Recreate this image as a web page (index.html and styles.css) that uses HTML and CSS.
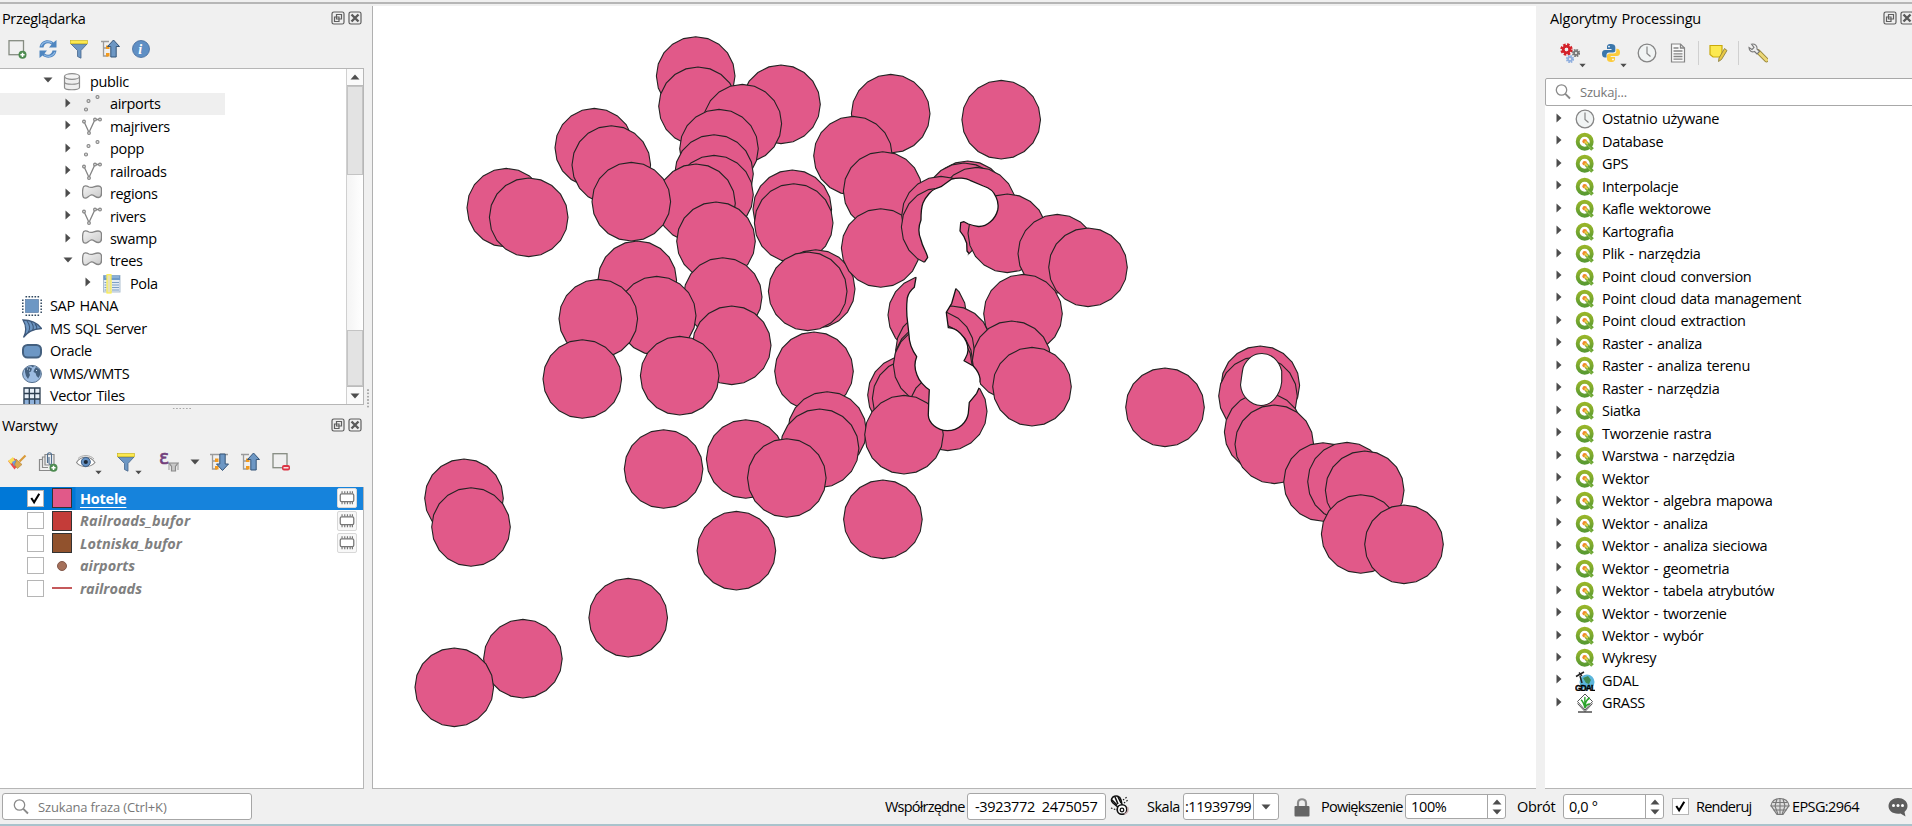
FILE: index.html
```html
<!DOCTYPE html>
<html lang="pl">
<head>
<meta charset="utf-8">
<title>QGIS</title>
<link rel="stylesheet" href="styles.css">
</head>
<body>
<svg class="defs" width="0" height="0">
  <defs>
    <linearGradient id="gPoly" x1="0" y1="0" x2="1" y2="1"><stop offset="0" stop-color="#f4f4f4"/><stop offset="1" stop-color="#c9c9c9"/></linearGradient>
    <linearGradient id="gQ" x1="0" y1="0" x2="0" y2="1"><stop offset="0" stop-color="#97b52a"/><stop offset="1" stop-color="#5a9a32"/></linearGradient>
    <symbol id="right" viewBox="0 0 6 10"><path d="M0.5 0.5L5.5 5L0.5 9.5Z" fill="#4d4d4d"/></symbol>
    <symbol id="down" viewBox="0 0 10 6"><path d="M0.5 0.5H9.5L5 5.5Z" fill="#4d4d4d"/></symbol>
    <symbol id="up" viewBox="0 0 10 6"><path d="M0.5 5.5H9.5L5 0.5Z" fill="#4d4d4d"/></symbol>
    <symbol id="db" viewBox="0 0 20 20"><path d="M2.5 4.5v11c0 3 15 3 15 0v-11" fill="#eee" stroke="#8c8c8c" stroke-width="1.2"/><ellipse cx="10" cy="4.5" rx="7.5" ry="2.8" fill="#f4f4f4" stroke="#8c8c8c" stroke-width="1.2"/><path d="M2.5 10c0 3 15 3 15 0" fill="none" stroke="#8c8c8c" stroke-width="1.2"/></symbol>
    <symbol id="points" viewBox="0 0 20 20"><g fill="#ddd" stroke="#858585" stroke-width="1.1"><circle cx="6.5" cy="7" r="1.5"/><circle cx="15.5" cy="3" r="1.5"/><circle cx="4" cy="15.5" r="1.5"/></g></symbol>
    <symbol id="lines" viewBox="0 0 20 20"><path d="M2 4.500L7 15.500L13 2.500H18" fill="none" stroke="#858585" stroke-width="1.3"/><g fill="#ddd" stroke="#858585" stroke-width="1.100"><circle cx="2" cy="4.500" r="1.400"/><circle cx="7" cy="16" r="1.400"/><circle cx="13" cy="2.500" r="1.400"/><circle cx="18" cy="2.500" r="1.400"/></g></symbol>
    <symbol id="area" viewBox="0 0 20 20"><path d="M1 4C1.500 1 4.500 1.500 7 3C10 4.500 12 2 16 2C20 2 19.500 5 19.500 8C19.500 11 19.500 13.500 16.500 13.500C13 13.500 12 10.500 9 11C6 12 4.500 16 1.500 13.500C0 11 .5 7 1 4Z" fill="url(#gPoly)" stroke="#858585" stroke-width="1.3"/></symbol>
    <symbol id="fields" viewBox="0 0 20 20"><rect x="1.500" y="1.500" width="16.500" height="16.500" fill="#e3ebf3" stroke="#aebfd0"/><rect x="1.500" y="1.500" width="16.500" height="4.500" fill="#6f9bc8"/><path d="M3 3h14" stroke="#a9c6e4"/><path d="M10 8.500h7M10 11h7M10 13.500h7M10 16h7M2.500 8.500h2M2.500 11h2M2.500 13.500h2M2.500 16h2" stroke="#7d9fc4"/><rect x="5" y="0.700" width="4" height="18.300" fill="#e6e2bb" stroke="#fcee4e" stroke-width="1.200"/></symbol>
    <symbol id="hana" viewBox="0 0 20 20"><rect x="3.500" y="3.500" width="13" height="13" fill="#6d97c4" stroke="#4b6f9b" stroke-width=".6"/><g stroke="#31485f" stroke-width="1.500" stroke-dasharray="1.600 1.400" fill="none"><path d="M3.500 .8h14M3.500 19.200h14M.8 3.500v14M19.200 3.500v14"/></g></symbol>
    <symbol id="mssql" viewBox="0 0 20 20"><path d="M1 1C8 1 16 4 19.500 9.500C12 10 5 13 1.500 18.500C5 12 4 6 1 1Z" fill="#6d97c4" stroke="#3d587a" stroke-width="1.300"/><path d="M5 2C8 6 8.500 10 6 13.500M9 3C11.500 6 12 9 10.500 11.500M13 5C15 7 15 8.500 14.500 10" fill="none" stroke="#3d587a" stroke-width="1.100"/></symbol>
    <symbol id="oracle" viewBox="0 0 20 20"><rect x="1" y="4" width="18" height="12.500" rx="4.500" fill="#6d97c4" stroke="#44607f" stroke-width="2"/></symbol>
    <symbol id="wms" viewBox="0 0 20 20"><ellipse cx="10" cy="10" rx="9.400" ry="8.600" fill="#9cbbe0" stroke="#55708f"/><path d="M3 4.500l4-1.500 3 1.500-1 3-2 1 1 2.500-2 4-2-3-1-4zM12 6l2-3 4 3 .500 4-2 4-2-2-1-3-2-1zM9 2h3l-1 1.500z" fill="#45617f"/><path d="M5 5h1M14 6l1 1M8 6l-1 0" stroke="#cfe0f2"/></symbol>
    <symbol id="grid" viewBox="0 0 20 20"><rect x="1.500" y="1.500" width="16" height="18" fill="#e6eef7"/><rect x="1.500" y="13" width="16" height="6" fill="#8fb1da"/><path d="M2 2H18V20H2ZM7.300 2V20M12.700 2V20M2 7.500H18M2 13H18" fill="none" stroke="#2c3e50" stroke-width="1.300"/></symbol>
    <symbol id="q" viewBox="0 0 20 20"><circle cx="9.700" cy="9.700" r="7" fill="#fff" stroke="url(#gQ)" stroke-width="3.900"/><path d="M11 10.500L17.500 17.500" stroke="#6aa531" stroke-width="3.600"/><path d="M11.500 12.200L16.500 17" stroke="#9ac45c" stroke-width="1"/><circle cx="9.700" cy="9.200" r="2.300" fill="#f08a2c"/><path d="M9.700 9.500l3.200 2.500" stroke="#e9d24a" stroke-width="1.800"/></symbol>
    <symbol id="clock" viewBox="0 0 20 20"><circle cx="10" cy="10" r="8.800" fill="#f1f4f4" stroke="#858585" stroke-width="1.300"/><path d="M10 3.500V10.500L13.500 13.500" fill="none" stroke="#858585" stroke-width="1.200"/></symbol>
    <symbol id="gdal" viewBox="0 0 20 20"><circle cx="12" cy="11" r="7.500" fill="#5cb6dc"/><path d="M8 7l5-2 3 4-2 4-3-1z" fill="#3f8a52"/><path d="M1 5.500L9 1M4 1.500l3 3.500M5 5l2 7" stroke="#222" stroke-width="1.500"/><text x="0" y="19.700" font-family="Liberation Sans" font-weight="700" font-size="8.500" letter-spacing="-1" stroke="#000" stroke-width=".4">GDAL</text></symbol>
    <symbol id="grass" viewBox="0 0 20 20"><path d="M10 1L17.500 8.500L10 17L2.500 8.500Z" fill="#fff" stroke="#555"/><path d="M2.500 10.500L10 18.500L17.500 10.500" fill="none" stroke="#555"/><path d="M10 15C10 10 12 6 15 5M10 15C9 11 8 8 6 7M10 15C10 10 9.500 6 10 4M10 15c1-3 3-4 5-4" fill="none" stroke="#2aa32a" stroke-width="1.400"/><path d="M3 19h14" stroke="#333" stroke-width="1.300"/></symbol>
    <symbol id="float" viewBox="0 0 14 14"><rect x="1" y="1" width="12" height="12" rx="1.800" fill="#efefef" stroke="#5f5f5f" stroke-width="1.200"/><path d="M5.500 3.500h5v4.500h-5zM3.500 6h4.500v4.500h-4.500z" fill="#efefef" stroke="#5f5f5f" stroke-width="1.200"/></symbol>
    <symbol id="close" viewBox="0 0 14 14"><rect x="1" y="1" width="12" height="12" rx="1.800" fill="#efefef" stroke="#5f5f5f" stroke-width="1.200"/><path d="M3.500 3.500L10.500 10.500M10.500 3.500L3.500 10.500" stroke="#5a5a5a" stroke-width="2.400"/></symbol>
    <symbol id="search" viewBox="0 0 18 18"><circle cx="7.500" cy="7" r="5.200" fill="none" stroke="#8a8a8a" stroke-width="1.300"/><path d="M11.300 10.800L16 15.500" stroke="#8a8a8a" stroke-width="1.900"/></symbol>
    <symbol id="newlayer" viewBox="0 0 20 20"><rect x="2" y="1.700" width="14.500" height="14" fill="#f0f0f0" stroke="#858b81" stroke-width="1.300"/><circle cx="15.500" cy="15.800" r="4" fill="#4c8a4f"/><path d="M15.500 13.700v4.200M13.400 15.800h4.200" stroke="#fff" stroke-width="1.500"/></symbol>
    <symbol id="refresh" viewBox="0 0 20 20"><path d="M1.500 8.500C2.500 1 11 -.5 15.500 3.500L18.500 1V8.500H11L13.500 5.500C10 3 6 4.500 5.500 8.500Z" fill="#4f86c0"/><path d="M18.500 11.500C17.500 19 9 20.500 4.500 16.500L1.500 19V11.500H9L6.500 14.500C10 17 14 15.500 14.500 11.500Z" fill="#4f86c0"/><path d="M3 7C5 2.500 10 1.500 14 4M17 13C15 17.500 10 18.500 6 16" fill="none" stroke="#8fb8e4" stroke-width="1.200"/></symbol>
    <symbol id="filter" viewBox="0 0 20 20"><path d="M2 5L8.500 11.500V17.500L12 19.200V11.500L18 5Z" fill="#6d97c4" stroke="#46668c" stroke-width=".8"/><rect x="1.500" y="1.500" width="17" height="3.300" fill="#fce94f" stroke="#c5ad10" stroke-width=".6"/></symbol>
    <symbol id="collapse" viewBox="0 0 20 20"><path d="M1 2.500H9M3.500 2.500V17H8M3.500 9h4" fill="none" stroke="#9b9b9b" stroke-width="1.300"/><rect x="6" y="6.500" width="3.500" height="3.500" fill="#f29a1e"/><rect x="6" y="14" width="3.500" height="3.500" fill="#f29a1e"/><path d="M13.500 1L19.500 7.500H16.200V18H10.800V7.500H7.500Z" fill="#6d97c4" stroke="#355478" stroke-width="1"/></symbol>
    <symbol id="expand" viewBox="0 0 20 20"><path d="M1 2.500H19M3.500 2.500V17H8M3.500 9h4" fill="none" stroke="#9b9b9b" stroke-width="1.300"/><rect x="6" y="6.500" width="3.500" height="3.500" fill="#f29a1e"/><rect x="6" y="14" width="3.500" height="3.500" fill="#f29a1e"/><path d="M13.500 18.500L19.500 12H16.200V2H10.800V12H7.500Z" fill="#6d97c4" stroke="#355478" stroke-width="1"/></symbol>
    <symbol id="info" viewBox="0 0 20 20"><circle cx="10" cy="10" r="8.500" fill="#5f8fc4" stroke="#44699a" stroke-width=".8"/><text x="7.300" y="15" font-family="Liberation Serif" font-style="italic" font-weight="700" font-size="14" fill="#fff">i</text></symbol>
    <symbol id="brush" viewBox="0 0 20 20"><path d="M1 9l6-3 6 5-5.500 6.500z" fill="#e94b4b"/><path d="M1 9l5-4 2 4-4 3z" fill="#f8df55"/><path d="M5 10l4-2 1 4-3 2z" fill="#6b9be0"/><path d="M9 7L15 12.500L10.500 16.500C8.500 14.500 6.500 12.500 9 10z" fill="#dca84e" stroke="#a2742a" stroke-width=".5"/><path d="M12.500 9.500L18.500 3.500" stroke="#d99a3a" stroke-width="2.200"/></symbol>
    <symbol id="group" viewBox="0 0 20 20"><path d="M4.500 7.500H1.500V18.500H13M7 5H4.500V15.500H10M16 5v8M7 2.500H16V13H7Z" fill="none" stroke="#8a8a8a" stroke-width="1.200"/><path d="M9.500 11V3c0-3 4-3 4 0v8c0 2-2.500 2-2.500 0V5" fill="none" stroke="#506e8e" stroke-width="1.100"/><circle cx="15.500" cy="15.800" r="4" fill="#4c8a4f"/><path d="M15.500 13.700v4.200M13.400 15.800h4.200" stroke="#fff" stroke-width="1.500"/></symbol>
    <symbol id="eye" viewBox="0 0 20 20"><path d="M.5 10.500C5 3.500 14 3.500 19 10.500C14 16 5 16 .5 10.500Z" fill="#fff" stroke="#8a8a8a" stroke-width="1.100"/><path d="M2 6.500C6 2.500 14 2.500 18 7" fill="none" stroke="#aaa"/><circle cx="9.800" cy="10" r="4.500" fill="#6692c4" stroke="#3d5e85"/><circle cx="9.800" cy="10" r="2.100" fill="#1e2a38"/></symbol>
    <symbol id="funnelsmall" viewBox="0 0 20 20"><path d="M10 11h9l-2.500 3.500v4.500h-4v-4.500z" fill="#c8c8c8" stroke="#8a8a8a" stroke-width="1.200"/><path d="M10 11V18M19 11V18" stroke="#999"/><text x="0" y="12" font-family="DejaVu Sans" font-size="19" fill="#72407c" stroke="#72407c" stroke-width=".6">ε</text></symbol>
    <symbol id="remove" viewBox="0 0 20 20"><rect x="2" y="1.700" width="14" height="14" fill="#f0f0f0" stroke="#858b81" stroke-width="1.300"/><rect x="11" y="13" width="8" height="5.600" rx="2" fill="#dc3545"/><path d="M12.500 15.800h5" stroke="#fff" stroke-width="1.300"/></symbol>
    <symbol id="chip" viewBox="0 0 20 20"><rect x="2.500" y="5.500" width="15" height="8.500" rx="1.500" fill="#fff" stroke="#777" stroke-width="1.400"/><path d="M4.500 5V2.500M7.500 5V2.500M10.500 5V2.500M13.500 5V2.500M16 5V2.500M4.500 14.500V17M7.500 14.500V17M10.500 14.500V17M13.500 14.500V17M16 14.500V17" stroke="#777" stroke-width="1.300"/></symbol>
    <symbol id="tick" viewBox="0 0 16 16"><path d="M3.500 7.500L6.500 12L12 3" fill="none" stroke="#000" stroke-width="2.200"/></symbol>
    <symbol id="gears" viewBox="0 0 20 20"><circle cx="6.500" cy="6.500" r="4" fill="none" stroke="#d4222a" stroke-width="4.400" stroke-dasharray="2 1.140"/><circle cx="6.500" cy="6.500" r="3.300" fill="none" stroke="#d4222a" stroke-width="2.600"/><circle cx="16" cy="10" r="2.500" fill="none" stroke="#777" stroke-width="3.200" stroke-dasharray="1.300 .66"/><circle cx="16" cy="10" r="2" fill="none" stroke="#777" stroke-width="1.500"/><circle cx="10" cy="16" r="2.500" fill="none" stroke="#8fafdf" stroke-width="3.200" stroke-dasharray="1.300 .66"/><circle cx="10" cy="16" r="2" fill="none" stroke="#8fafdf" stroke-width="1.500"/></symbol>
    <symbol id="python" viewBox="0 0 20 20"><path d="M10 1C6.500 1 6 2.500 6 4V6H10.500V7H4C2 7 1 8.500 1 10.500C1 13 2 14.500 4 14.500H5.500V12C5.500 10.500 6.500 9.500 8 9.500H12C13.500 9.500 14.300 8.500 14.300 7.500V4C14.300 2 12.500 1 10 1Z" fill="#3a76ab"/><path d="M10 19C13.500 19 14 17.500 14 16V14H9.700V13H16C18 13 19 11.500 19 9.500C19 7 18 5.700 16 5.700H15.300V8C15.300 9.800 14 10.500 12.500 10.500H8.500C7 10.500 6 11.500 6 12.500V16C6 18 7.500 19 10 19Z" fill="#fccb3c"/><circle cx="8" cy="3.600" r=".9" fill="#fff"/><circle cx="12" cy="16.400" r=".9" fill="#fff"/></symbol>
    <symbol id="doc" viewBox="0 0 20 20"><path d="M3.500 1H12.500L16.500 5V19H3.500Z" fill="#fafafa" stroke="#858585" stroke-width="1.200"/><path d="M12.500 1V5H16.500M5.500 5h5M5.500 8h9M5.500 10.800h9M5.500 13.500h9M5.500 16.200h9" fill="none" stroke="#858585" stroke-width="1.300"/></symbol>
    <symbol id="note" viewBox="0 0 20 20"><path d="M2 2.500H14V14H5L2 11.500Z" fill="#fce94f" stroke="#c9a90c" stroke-width="1.200"/><path d="M16.500 5.500L19 7.500L13.500 16.500L10.500 18.500L11 15Z" fill="#e8c845" stroke="#8e8140" stroke-width=".9"/></symbol>
    <symbol id="wrench" viewBox="0 0 20 20"><path d="M10 8.500L18.500 17" stroke="#98863a" stroke-width="4.600" stroke-linecap="round"/><path d="M10.500 9L18.500 17" stroke="#ecd777" stroke-width="3" stroke-linecap="round"/><path d="M3.500 1.200C7 .5 9.500 3 9 6L11.500 8.500L9 11L6.500 8.500C4 9.500 1 8 1 4.500L4 6.500L6 4.500Z" fill="#eee" stroke="#777" stroke-width="1.100"/></symbol>
    <symbol id="lock" viewBox="0 0 16 20"><path d="M4 10V6C4 1 12 1 12 6V10" fill="none" stroke="#8b8b8b" stroke-width="2.200"/><rect x=".5" y="9" width="15" height="10.500" rx="1" fill="#666"/></symbol>
    <symbol id="globe" viewBox="0 0 20 20"><path d="M1 8.500C2 3.500 6 1.500 10 1.500S18 3.500 19 8.500L13 17.500H7Z" fill="#ddd" stroke="#777" stroke-width="1.200"/><path d="M.5 9H19.500M2.500 5.500H17.500M3.500 13H16.500M10 1.500V18M7 2L5 9L8 17.500M13 2L15 9L12 17.500" fill="none" stroke="#777" stroke-width="1.100"/></symbol>
    <symbol id="bubble" viewBox="0 0 20 20"><path d="M10 1C15 1 19.500 4 19.500 9C19.500 12 18 13.500 16.500 15L17.500 19.500L12.500 16.500C5 17.500 .5 14 .5 9C.5 4 5 1 10 1Z" fill="#5e5e5e"/><circle cx="5.500" cy="8.500" r="1.500" fill="#fff"/><circle cx="10" cy="8.500" r="1.500" fill="#fff"/><circle cx="14.500" cy="8.500" r="1.500" fill="#fff"/></symbol>
    <symbol id="extents" viewBox="0 0 20 20"><path d="M3 2C6 0 10 1 11 5L12 10L8 12L3 8C1 6 1 4 3 2Z" fill="#fff" stroke="#111" stroke-width="1.600"/><path d="M5 2l3 7M8 2l3 6M2 5l5 5" stroke="#111" stroke-width="1.600"/><circle cx="12" cy="14.500" r="4.800" fill="#fff" stroke="#111" stroke-width="1.600"/><circle cx="12" cy="15" r="1.800" fill="#fff" stroke="#111" stroke-width="1.300"/><path d="M13 5l4-3M14 8l4-3M1 13l6 2" stroke="#111" stroke-width="1.100" stroke-dasharray="1.500 1.500"/><path d="M17.500 12c1.500 3 0 6-3 7" fill="none" stroke="#c4a9ac" stroke-width="1.500"/></symbol>
    <polygon id="b" points="39.3,0 37.4,12.1 31.8,23.1 23.1,31.8 12.1,37.4 0,39.3 -12.1,37.4 -23.1,31.8 -31.8,23.1 -37.4,12.1 -39.3,0 -37.4,-12.1 -31.8,-23.1 -23.1,-31.8 -12.1,-37.4 0,-39.3 12.1,-37.4 23.1,-31.8 31.8,-23.1 37.4,-12.1"/>
    <path id="water" d="M941 186.700L951.700 179C958 177.500 966 178 970 180.300L983.300 186C990 188 994 192 996 197C998 201 998.500 206 997.700 210C995.500 219 987 227 978.300 226.500C974 226 971 225 968.300 224L964 221.700L960.700 222.700L960 231L964 236.700L966.700 243.300L967 251L969 253.500L961.700 270L956 288.300L951.700 303.300L946.300 312.300L948.300 327.700C954 328 958 331 960.500 333.500C965 338 968 344 968 350C968 355 966 357 964 360.700L973.300 366C977 370 979.500 375 980 378.500L980 385L981 388.500L979 388L976.700 393.300L969.300 402.300L968.300 413.300C967 422 959 430.500 947.300 430.700C937 430.500 928.500 423 928.300 415L928.700 403.300L929.300 389.700C925 387 919 381 917 375C914.500 369 914.500 362 916.700 356.700C912 350 909 341 909 335L907.700 323C906.500 315 906.500 305 907.300 298C908.500 293 911 290 914.300 287.300L916 277.700L917 273L924.300 262.300L927.700 257.300C926 251 922.500 247 921 240C918 233 918.500 226 921 220C921 213 921 208 923 203C926 196 932 190 935 189Z"/>
    <clipPath id="coast">
      <use href="#b" x="967.700" y="200.300"/><use href="#b" x="964" y="202.300"/><use href="#b" x="976.700" y="206.700"/><use href="#b" x="941" y="215.700"/><use href="#b" x="940.700" y="227"/><use href="#b" x="1007.300" y="233.300"/><use href="#b" x="927.300" y="315"/><use href="#b" x="951.700" y="345.300"/><use href="#b" x="935" y="350"/><use href="#b" x="932.700" y="365"/><use href="#b" x="907" y="395"/><use href="#b" x="911.700" y="398.300"/><use href="#b" x="947.700" y="411.300"/><use href="#b" x="904" y="434.700"/><use href="#b" x="1011.700" y="360.300"/>
    </clipPath>
  </defs>
</svg>

<div class="app">
  <div class="topline"></div>
  <main class="work">
    <aside class="left">
      <header class="dock-title"><span>Przeglądarka</span><svg><use href="#float"/></svg><svg><use href="#close"/></svg></header>
      <div class="tools browser-tools">
        <svg><use href="#newlayer"/></svg><svg><use href="#refresh"/></svg><svg><use href="#filter"/></svg><svg><use href="#collapse"/></svg><svg><use href="#info"/></svg>
      </div>
      <div class="browser">
        <ul class="tree">
          <li class="row d3"><svg class="dn"><use href="#down"/></svg><svg class="ic"><use href="#db"/></svg>public</li>
          <li class="row d4 hover"><svg class="rt"><use href="#right"/></svg><svg class="ic"><use href="#points"/></svg>airports</li>
          <li class="row d4"><svg class="rt"><use href="#right"/></svg><svg class="ic"><use href="#lines"/></svg>majrivers</li>
          <li class="row d4"><svg class="rt"><use href="#right"/></svg><svg class="ic"><use href="#points"/></svg>popp</li>
          <li class="row d4"><svg class="rt"><use href="#right"/></svg><svg class="ic"><use href="#lines"/></svg>railroads</li>
          <li class="row d4"><svg class="rt"><use href="#right"/></svg><svg class="ic"><use href="#area"/></svg>regions</li>
          <li class="row d4"><svg class="rt"><use href="#right"/></svg><svg class="ic"><use href="#lines"/></svg>rivers</li>
          <li class="row d4"><svg class="rt"><use href="#right"/></svg><svg class="ic"><use href="#area"/></svg>swamp</li>
          <li class="row d4"><svg class="dn"><use href="#down"/></svg><svg class="ic"><use href="#area"/></svg>trees</li>
          <li class="row d5"><svg class="rt"><use href="#right"/></svg><svg class="ic"><use href="#fields"/></svg>Pola</li>
          <li class="row d1"><svg class="ic"><use href="#hana"/></svg>SAP HANA</li>
          <li class="row d1"><svg class="ic"><use href="#mssql"/></svg>MS SQL Server</li>
          <li class="row d1"><svg class="ic"><use href="#oracle"/></svg>Oracle</li>
          <li class="row d1"><svg class="ic"><use href="#wms"/></svg>WMS/WMTS</li>
          <li class="row d1"><svg class="ic"><use href="#grid"/></svg>Vector Tiles</li>
        </ul>
        <div class="scroll"><div class="sbtn"><svg class="dn"><use href="#up"/></svg></div><div class="thumb"></div><div class="track"></div><div class="thumb low"></div><div class="sbtn last"><svg class="dn"><use href="#down"/></svg></div></div>
      </div>
      <div class="grip"></div>
      <header class="dock-title layers-title"><span>Warstwy</span><svg><use href="#float"/></svg><svg><use href="#close"/></svg></header>
      <div class="tools layer-tools">
        <svg><use href="#brush"/></svg><svg class="t2"><use href="#group"/></svg><svg class="t3"><use href="#eye"/></svg><svg class="mini"><use href="#down"/></svg><svg class="t4"><use href="#filter"/></svg><svg class="mini"><use href="#down"/></svg><svg class="t5"><use href="#funnelsmall"/></svg><svg class="dn t6"><use href="#down"/></svg><svg class="t7"><use href="#expand"/></svg><svg class="t8"><use href="#collapse"/></svg><svg class="t9"><use href="#remove"/></svg>
      </div>
      <ul class="layers">
        <li class="layer sel"><span class="check"><svg><use href="#tick"/></svg></span><i class="swatch pink"></i><span class="name">Hotele</span><span class="chip"><svg><use href="#chip"/></svg></span></li>
        <li class="layer"><span class="check"></span><i class="swatch red"></i><span class="name wide">Railroads_bufor</span><span class="chip"><svg><use href="#chip"/></svg></span></li>
        <li class="layer"><span class="check"></span><i class="swatch brown"></i><span class="name">Lotniska_bufor</span><span class="chip"><svg><use href="#chip"/></svg></span></li>
        <li class="layer"><span class="check"></span><i class="swatch dot"></i><span class="name">airports</span></li>
        <li class="layer"><span class="check"></span><i class="swatch line"></i><span class="name">railroads</span></li>
      </ul>
    </aside>
    <div class="vgrip"></div>
    <section class="map">
      <svg class="canvas" viewBox="373 6 1163 782">
        <g fill="#e15989" stroke="#232323" stroke-width="1.100">
          <use href="#b" x="695.700" y="76"/><use href="#b" x="781" y="104.300"/><use href="#b" x="698" y="106.300"/><use href="#b" x="742.300" y="123.700"/><use href="#b" x="719" y="148.700"/><use href="#b" x="714" y="174"/><use href="#b" x="714" y="194.700"/><use href="#b" x="696" y="203.300"/>
          <use href="#b" x="594.300" y="147.700"/><use href="#b" x="611.300" y="165"/><use href="#b" x="631.300" y="201.700"/><use href="#b" x="506.300" y="207.700"/><use href="#b" x="528.700" y="217.300"/>
          <use href="#b" x="637.300" y="280.300"/><use href="#b" x="716" y="241.300"/><use href="#b" x="722.700" y="297"/><use href="#b" x="656.700" y="315.700"/><use href="#b" x="598.300" y="318.700"/><use href="#b" x="731.700" y="345.300"/><use href="#b" x="582.300" y="379"/><use href="#b" x="679.700" y="375.700"/>
          <use href="#b" x="792.300" y="209.300"/><use href="#b" x="793.700" y="223"/><use href="#b" x="815.700" y="289"/><use href="#b" x="807.700" y="291.300"/><use href="#b" x="814" y="371.300"/>
          <use href="#b" x="890.700" y="113.700"/><use href="#b" x="853" y="155.700"/><use href="#b" x="882.700" y="191"/><use href="#b" x="880.700" y="248"/><use href="#b" x="1001.200" y="119.700"/>
          <use href="#b" x="663.600" y="469"/><use href="#b" x="745.700" y="459"/><use href="#b" x="827.100" y="431"/><use href="#b" x="819.600" y="448.300"/><use href="#b" x="786.800" y="478"/><use href="#b" x="736.400" y="550.700"/><use href="#b" x="882.900" y="519.300"/>
          <use href="#b" x="464" y="498.300"/><use href="#b" x="471" y="527"/><use href="#b" x="628.200" y="617.700"/><use href="#b" x="522.900" y="658.700"/><use href="#b" x="454.300" y="687.300"/>
          <use href="#b" x="967.700" y="200.300"/><use href="#b" x="964" y="202.300"/><use href="#b" x="976.700" y="206.700"/><use href="#b" x="941" y="215.700"/><use href="#b" x="940.700" y="227"/><use href="#b" x="1007.300" y="233.300"/>
          <use href="#b" x="927.300" y="315"/><use href="#b" x="951.700" y="345.300"/><use href="#b" x="935" y="350"/><use href="#b" x="907" y="395"/><use href="#b" x="911.700" y="398.300"/><use href="#b" x="933.500" y="362"/><use href="#b" x="932.700" y="365"/><use href="#b" x="947.700" y="411.300"/><use href="#b" x="904" y="434.700"/>
          <use href="#b" x="1057.300" y="253.700"/><use href="#b" x="1088" y="267.300"/><use href="#b" x="1023" y="313.700"/><use href="#b" x="1011.700" y="360.300"/>
        </g>
        <use href="#water" fill="#fff"/>
        <g clip-path="url(#coast)"><use href="#water" fill="none" stroke="#151515" stroke-width="1.300" stroke-linejoin="round"/></g>
        <g fill="#e15989" stroke="#232323" stroke-width="1.100">
          <use href="#b" x="1032" y="386.700"/><use href="#b" x="1165" y="407.300"/>
          <use href="#b" x="1260.300" y="385.300"/><use href="#b" x="1258" y="396"/><use href="#b" x="1263.700" y="432"/>
          <path fill="#fff" d="M1262 353.500C1271 353.500 1279 360 1281.700 371V382C1280 396 1271 405.500 1261 405.500C1250 405 1241.500 396 1240.500 385C1241.500 378 1242 372 1243.300 367C1247 359 1253 353.500 1262 353.500Z"/>
          <use href="#b" x="1274.300" y="444.300"/><use href="#b" x="1323" y="482"/><use href="#b" x="1347" y="481.700"/><use href="#b" x="1364.700" y="490.300"/><use href="#b" x="1360.700" y="534"/><use href="#b" x="1404" y="544.300"/>
        </g>
      </svg>
    </section>
    <aside class="right">
      <header class="dock-title"><span>Algorytmy Processingu</span><svg><use href="#float"/></svg><svg><use href="#close"/></svg></header>
      <div class="tools proc-tools">
        <svg><use href="#gears"/></svg><svg class="mini"><use href="#down"/></svg><svg class="p2"><use href="#python"/></svg><svg class="mini"><use href="#down"/></svg><svg class="p3"><use href="#clock"/></svg><svg class="p4"><use href="#doc"/></svg><i class="sep"></i><svg><use href="#note"/></svg><i class="sep"></i><svg><use href="#wrench"/></svg>
      </div>
      <div class="find"><svg><use href="#search"/></svg>Szukaj...</div>
      <ul class="tree algs">
        <li class="row"><svg class="rt"><use href="#right"/></svg><svg class="ic"><use href="#clock"/></svg>Ostatnio używane</li>
        <li class="row"><svg class="rt"><use href="#right"/></svg><svg class="ic"><use href="#q"/></svg>Database</li>
        <li class="row"><svg class="rt"><use href="#right"/></svg><svg class="ic"><use href="#q"/></svg>GPS</li>
        <li class="row"><svg class="rt"><use href="#right"/></svg><svg class="ic"><use href="#q"/></svg>Interpolacje</li>
        <li class="row"><svg class="rt"><use href="#right"/></svg><svg class="ic"><use href="#q"/></svg>Kafle wektorowe</li>
        <li class="row"><svg class="rt"><use href="#right"/></svg><svg class="ic"><use href="#q"/></svg>Kartografia</li>
        <li class="row"><svg class="rt"><use href="#right"/></svg><svg class="ic"><use href="#q"/></svg>Plik - narzędzia</li>
        <li class="row"><svg class="rt"><use href="#right"/></svg><svg class="ic"><use href="#q"/></svg>Point cloud conversion</li>
        <li class="row"><svg class="rt"><use href="#right"/></svg><svg class="ic"><use href="#q"/></svg>Point cloud data management</li>
        <li class="row"><svg class="rt"><use href="#right"/></svg><svg class="ic"><use href="#q"/></svg>Point cloud extraction</li>
        <li class="row"><svg class="rt"><use href="#right"/></svg><svg class="ic"><use href="#q"/></svg>Raster - analiza</li>
        <li class="row"><svg class="rt"><use href="#right"/></svg><svg class="ic"><use href="#q"/></svg>Raster - analiza terenu</li>
        <li class="row"><svg class="rt"><use href="#right"/></svg><svg class="ic"><use href="#q"/></svg>Raster - narzędzia</li>
        <li class="row"><svg class="rt"><use href="#right"/></svg><svg class="ic"><use href="#q"/></svg>Siatka</li>
        <li class="row"><svg class="rt"><use href="#right"/></svg><svg class="ic"><use href="#q"/></svg>Tworzenie rastra</li>
        <li class="row"><svg class="rt"><use href="#right"/></svg><svg class="ic"><use href="#q"/></svg>Warstwa - narzędzia</li>
        <li class="row"><svg class="rt"><use href="#right"/></svg><svg class="ic"><use href="#q"/></svg>Wektor</li>
        <li class="row"><svg class="rt"><use href="#right"/></svg><svg class="ic"><use href="#q"/></svg>Wektor - algebra mapowa</li>
        <li class="row"><svg class="rt"><use href="#right"/></svg><svg class="ic"><use href="#q"/></svg>Wektor - analiza</li>
        <li class="row"><svg class="rt"><use href="#right"/></svg><svg class="ic"><use href="#q"/></svg>Wektor - analiza sieciowa</li>
        <li class="row"><svg class="rt"><use href="#right"/></svg><svg class="ic"><use href="#q"/></svg>Wektor - geometria</li>
        <li class="row"><svg class="rt"><use href="#right"/></svg><svg class="ic"><use href="#q"/></svg>Wektor - tabela atrybutów</li>
        <li class="row"><svg class="rt"><use href="#right"/></svg><svg class="ic"><use href="#q"/></svg>Wektor - tworzenie</li>
        <li class="row"><svg class="rt"><use href="#right"/></svg><svg class="ic"><use href="#q"/></svg>Wektor - wybór</li>
        <li class="row"><svg class="rt"><use href="#right"/></svg><svg class="ic"><use href="#q"/></svg>Wykresy</li>
        <li class="row"><svg class="rt"><use href="#right"/></svg><svg class="ic"><use href="#gdal"/></svg>GDAL</li>
        <li class="row"><svg class="rt"><use href="#right"/></svg><svg class="ic"><use href="#grass"/></svg>GRASS</li>
      </ul>
    </aside>
  </main>
  <footer class="status">
    <div class="field locator"><svg><use href="#search"/></svg>Szukana fraza (Ctrl+K)</div>
    <span class="lbl l-coord">Współrzędne</span>
    <div class="field coord">-3923772&nbsp; 2475057</div>
    <svg class="s-ext"><use href="#extents"/></svg>
    <span class="lbl l-scale">Skala</span>
    <div class="field scale"><span>:11939799</span><b class="drop"><svg class="dn"><use href="#down"/></svg></b></div>
    <svg class="s-lock"><use href="#lock"/></svg>
    <span class="lbl l-mag">Powiększenie</span>
    <div class="field spin mag"><span>100%</span><b><svg class="dn"><use href="#up"/></svg><svg class="dn"><use href="#down"/></svg></b></div>
    <span class="lbl l-rot">Obrót</span>
    <div class="field spin rot"><span>0,0 °</span><b><svg class="dn"><use href="#up"/></svg><svg class="dn"><use href="#down"/></svg></b></div>
    <span class="check rend"><svg><use href="#tick"/></svg></span>
    <span class="lbl l-rend">Renderuj</span>
    <svg class="s-globe"><use href="#globe"/></svg>
    <span class="lbl l-epsg">EPSG:2964</span>
    <svg class="s-bub"><use href="#bubble"/></svg>
  </footer>
</div>
</body>
</html>
```

FILE: styles.css
```css
* { box-sizing: border-box; }
html, body { margin: 0; height: 100%; overflow: hidden; }
body { background: #f0f0f0; color: #000; font: 14.5px/20px "Open Sans", "Noto Sans", sans-serif; letter-spacing: -0.35px; }
ul { list-style: none; margin: 0; padding: 0; }
svg { display: block; flex: none; }
.defs { position: absolute; }
.app { width: 1912px; height: 826px; display: flex; flex-direction: column; overflow: hidden; }
.topline { height: 6px; background: linear-gradient(#f0f0f0 2px, #b6b6b6 2px, #b6b6b6 4px, #f0f0f0 4px); flex: none; }
.work { height: 783px; display: flex; flex: none; }

.left { width: 364px; display: flex; flex-direction: column; flex: none; }
.dock-title { height: 25px; padding: 0 2px 1px 2px; display: flex; align-items: center; gap: 3px; flex: none; }
.dock-title span { flex: 1; padding-top: 1px; }
.dock-title svg { width: 14px; height: 14px; }
.tools { display: flex; align-items: center; flex: none; }
.tools svg { width: 20px; height: 20px; }
.tools svg.mini { width: 7px; height: 5px; align-self: flex-end; margin-left: -1px; }
.tools svg.dn, .dn { width: 10px; height: 6px; }
.browser-tools { height: 37px; padding: 0 0 2px 7px; gap: 11px; }
.browser { height: 337px; border: solid #b6b6b6; border-width: 1px 1px 1px 0; background: #fff; display: flex; overflow: hidden; flex: none; }
.tree { flex: 1; padding-top: 1.500px; }
.row { height: 22.470px; display: flex; align-items: center; white-space: nowrap; word-spacing: 1.300px; }
.row .ic { width: 20px; height: 20px; margin-right: 8px; }
.row .rt { width: 6px; height: 10px; margin-right: 11px; margin-left: 2px; margin-top: -3px; }
.row > .dn { margin-right: 9px; margin-top: -3px; }
.d1 { padding-left: 22px; }
.d3 { padding-left: 43px; }
.d4 { padding-left: 63px; }
.d5 { padding-left: 83px; }
.hover { width: 225px; background: #efefef; }
.scroll { width: 17px; display: flex; flex-direction: column; border-left: 1px solid #d0d0d0; background: linear-gradient(90deg, #f4f4f4, #fff); }
.sbtn { height: 17px; display: flex; align-items: center; justify-content: center; border-bottom: 1px solid #bbb; background: #fafafa; }
.sbtn.last { border-bottom: 0; border-top: 1px solid #bbb; height: 18px; }
.thumb { height: 89px; background: #e3e3e3; border: 1px solid #c4c4c4; }
.thumb.low { height: 56px; }
.track { flex: 1; }
.grip { height: 7px; background: radial-gradient(circle, #aaa 0.7px, transparent 1px) 0 0 / 3.300px 7px; width: 20px; margin-left: 172px; flex: none; }
.layers-title { height: 27px; }
.layer-tools { height: 48px; padding: 0 0 3px 7px; }
.layer-tools .mini { margin-bottom: 9px; }
.proc-tools .mini { margin-bottom: 7px; }
.t2 { margin-left: 11px; }
.t3 { margin-left: 18px; }
.t4 { margin-left: 14px; }
.t5 { margin-left: 17px; }
.tools svg.t6 { margin-left: 11px; }
.t7 { margin-left: 9px; }
.t8 { margin-left: 11px; }
.t9 { margin-left: 11px; }
.layers { flex: 1; background: #fff; border: solid #b6b6b6; border-width: 0 1px 1px 0; }
.layer { height: 22.500px; display: flex; align-items: center; padding: 0 6px 0 27px; }
.layer.sel { background: linear-gradient(90deg, #0078d7 75px, #1683dc 76px); color: #fff; }
.check { width: 17px; height: 17px; border: 1px solid #b5b5b5; background: #fff; flex: none; }
.check svg { width: 15px; height: 15px; }
.swatch { width: 20px; height: 20px; margin: 0 8px; border: 1px solid #333; flex: none; }
.pink { background: #e15989; }
.red { background: #c43c39; }
.brown { background: #91522d; }
.dot { width: 10px; height: 10px; border-radius: 5px; background: #a5705a; border-color: #83584a; margin: 0 13px; }
.line { height: 2px; border: 0; background: #c5595b; }
.name { flex: 1; font-weight: 700; font-style: italic; color: #808080; letter-spacing: 0; padding-top: 1px; }
.name.wide { letter-spacing: 0.15px; }
.sel .name { color: #fff; font-style: normal; text-decoration: underline; text-underline-offset: 3px; text-decoration-thickness: 1px; letter-spacing: -0.25px; }
.chip { width: 20px; height: 20px; border: 1px solid #d8d8d8; border-radius: 2px; background: #f8f8f8; flex: none; }
.chip svg { width: 18px; height: 18px; }
.vgrip { width: 8px; flex: none; background: radial-gradient(circle, #aaa 0.700px, transparent 1px) 0 0 / 8px 3.300px; background-clip: content-box; padding: 382px 0 381px; }

.map { width: 1164px; border-left: 1px solid #b0b0b0; border-bottom: 1px solid #b6b6b6; background: #fff; flex: none; }
.canvas { width: 1163px; height: 782px; }

.right { width: 367px; margin-left: 9px; display: flex; flex-direction: column; flex: none; overflow: hidden; }
.right .dock-title { padding-left: 5px; padding-right: 0; width: 369px; letter-spacing: -0.18px; word-spacing: 1px; }
.proc-tools { height: 47px; padding: 0 0 3px 15px; }
.p2 { margin-left: 15px; }
.p3 { margin-left: 10px; }
.p4 { margin-left: 11px; }
.sep { width: 1px; height: 24px; background: #d0d0d0; margin: 0 9.500px 0 9.500px; }
.find { height: 28px; width: 380px; border: 1px solid #a8a8a8; border-radius: 2px; background: #fff; color: #777; font-size: 13px; letter-spacing: -0.2px; display: flex; align-items: center; gap: 8px; padding-left: 8px; flex: none; }
.find svg, .locator svg { width: 18px; height: 18px; }
.algs { background: #fff; border-bottom: 1px solid #b6b6b6; padding: 2px 0 0 8.500px; letter-spacing: -0.32px; }
.algs .row .rt { margin-right: 13px; }
.algs .row .ic { margin-right: 7.500px; }

.status { height: 37px; display: flex; align-items: center; border-bottom: 2px solid #a9c3cc; padding: 0 0 0 2px; flex: none; white-space: nowrap; }
.status > * { flex: none; }
.field { height: 27px; border: 1px solid #a6a6a6; border-radius: 3px; background: #fff; display: flex; align-items: center; overflow: hidden; }
.locator { width: 250px; color: #777; font-size: 13px; padding-left: 9px; gap: 8px; letter-spacing: -0.15px; }
.l-coord { width: 78px; margin-left: 633px; letter-spacing: -0.8px; }
.coord { width: 139px; margin-left: 4px; padding-left: 7px; }
.s-ext { width: 20px; height: 20px; margin-left: 4px; margin-top: -3px; }
.l-scale { width: 34px; margin-left: 17px; letter-spacing: -0.5px; }
.scale { width: 96px; margin-left: 2px; padding-left: 1px; letter-spacing: -0.45px; }
.scale span, .spin span { flex: 1; }
.field b { height: 100%; border-left: 1px solid #a6a6a6; display: flex; flex-direction: column; align-items: center; justify-content: center; gap: 4px; width: 18px; }
.field .drop { width: 25px; }
.s-lock { width: 16px; height: 20px; margin-left: 15px; }
.l-mag { width: 82px; margin-left: 11px; letter-spacing: -0.75px; }
.spin { height: 25px; width: 101px; padding-left: 5px; }
.mag { margin-left: 2px; }
.l-rot { width: 36px; margin-left: 11px; }
.rot { margin-left: 10px; }
.rend { margin-left: 8px; }
.l-rend { width: 56px; margin-left: 7px; letter-spacing: -0.75px; }
.s-globe { width: 20px; height: 20px; margin-left: 18px; }
.l-epsg { width: 68px; margin-left: 2px; letter-spacing: -0.6px; }
.s-bub { width: 20px; height: 20px; margin-left: 28px; }
```
